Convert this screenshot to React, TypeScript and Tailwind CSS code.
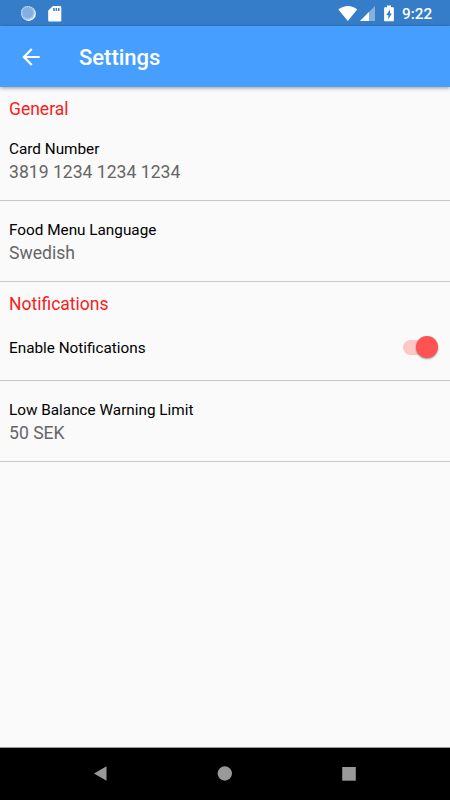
import React from 'react';

function StatusBar() {
  return (
    <div className="flex h-[26px] shrink-0 items-center bg-[#367dc9] text-white">
      <svg className="ml-5 h-4 w-4" viewBox="0 0 16 16">
        <circle cx="8.6" cy="8.7" r="7.2" fill="#fff" />
        <circle cx="7.800" cy="7.800" r="6.900" fill="#83b0e0" />
        <circle cx="7.800" cy="7.800" r="6.200" fill="none" stroke="#c4d9f0" strokeWidth="1.400" strokeDasharray="1.200 0.900" />
      </svg>
      <svg className="ml-3 h-[17px] w-[14px]" viewBox="0 0 14 17">
        <path d="M5 1h7a1.300 1.300 0 0 1 1.300 1.300v12.400A1.300 1.300 0 0 1 12 16.500H1.500A1.300 1.300 0 0 1 .2 15.200V5.500z" fill="#fff" />
        <path d="M5.200 3h1.500v3H5.200zM7.600 3h1.500v3H7.600zM10 3h1.500v3H10z" fill="#367dc9" />
      </svg>
      <svg className="ml-auto h-[17px] w-5" viewBox="0 0 20 17">
        <path d="M.3 4.500C6-.2 14-.2 19.200 4.500L9.800 16z" fill="#fff" />
      </svg>
      <svg className="ml-[2px] h-4 w-4" viewBox="0 0 16 16">
        <path d="M15 1v15H0z" fill="#86b1df" />
        <path d="M9 7v9H0z" fill="#fff" />
      </svg>
      <svg className="ml-[8px] h-[17px] w-[10px]" viewBox="0 0 10 17">
        <path d="M3 .5h4v1.700h1.800c.7 0 1.100.4 1.100 1.100v11.900c0 .7-.4 1.100-1.100 1.100H1.200c-.7 0-1.100-.4-1.100-1.100V3.300c0-.7.4-1.100 1.100-1.100H3z" fill="#fff" />
        <path d="M6 4.500 2.300 10h2v4.200L7.800 8.500H6z" fill="#367dc9" />
      </svg>
      <span className="ml-[8px] mr-[17px] w-[31px] whitespace-nowrap pt-[2px] text-[15.300px] font-medium leading-[26px]">9:22</span>
    </div>
  );
}

function AppBar() {
  return (
    <header className="z-10 flex h-[61px] shrink-0 items-center bg-[#469fff] text-white shadow-[0_1px_4px_rgba(0,0,0,0.4)]">
      <svg className="ml-[18px] h-[26px] w-[26px]" viewBox="0 0 24 24" fill="#fff">
        <path d="M20 11H7.830l5.590-5.590L12 4l-8 8 8 8 1.410-1.410L7.830 13H20v-2z" />
      </svg>
      <h1 className="ml-[35px] pt-[2px] text-[22px] font-medium">Settings</h1>
    </header>
  );
}

function SectionTitle({ children }: { children: string }) {
  return <h2 className="h-[34px] pl-[9px] pt-[11px] text-[17.500px] leading-[22px] text-[#f81c1c]">{children}</h2>;
}

function Row({ label, value, first = false }: { label: string; value: string; first?: boolean }) {
  return (
    <div className={`flex flex-col border-b border-[#c8c8c8] pl-[9px] ${first ? 'h-[80px] pt-[17px]' : 'h-[81px] pt-[18px]'}`}>
      <span className="text-[15.300px] leading-[22px] text-black">{label}</span>
      <span className="text-[17.600px] leading-[24px] text-[#666]">{value}</span>
    </div>
  );
}

export default function App() {
  return (
    <div className="flex h-[800px] w-[450px] flex-col overflow-hidden bg-[#fafafa] font-[Roboto,sans-serif]">
      <StatusBar />
      <AppBar />
      <main className="flex-1">
        <SectionTitle>General</SectionTitle>
        <Row label="Card Number" value="3819 1234 1234 1234" first />
        <Row label="Food Menu Language" value="Swedish" />
        <SectionTitle>Notifications</SectionTitle>
        <div className="flex h-[65px] items-center justify-between border-b border-[#c8c8c8] pb-[2px] pl-[9px] pr-3">
          <span className="pt-[2px] text-[15.300px] leading-[22px] text-black">Enable Notifications</span>
          <button role="switch" aria-checked="true" aria-label="Enable Notifications" className="flex h-[22px] w-[35px] items-center">
            <span className="h-[15px] w-[24px] shrink-0 rounded-l-full bg-[#fec7c7]" />
            <span className="-ml-[11px] h-[22px] w-[22px] shrink-0 rounded-full bg-[#ff5252] shadow-[0_1px_2px_rgba(0,0,0,0.4)]" />
          </button>
        </div>
        <Row label="Low Balance Warning Limit" value="50 SEK" />
      </main>
      <nav className="flex h-[53px] shrink-0 items-center border-t border-[#999] bg-black">
        <svg className="ml-[93px] h-4 w-4" viewBox="0 0 16 16"><path d="M1 7.500 13.500.300v14.400z" fill="#999" /></svg>
        <svg className="ml-[108px] h-4 w-4" viewBox="0 0 16 16"><circle cx="7.800" cy="7.500" r="7.200" fill="#999" /></svg>
        <svg className="ml-[108px] h-4 w-4" viewBox="0 0 16 16"><path d="M1.200 1h13.600v13.700H1.200z" fill="#999" /></svg>
      </nav>
    </div>
  );
}
